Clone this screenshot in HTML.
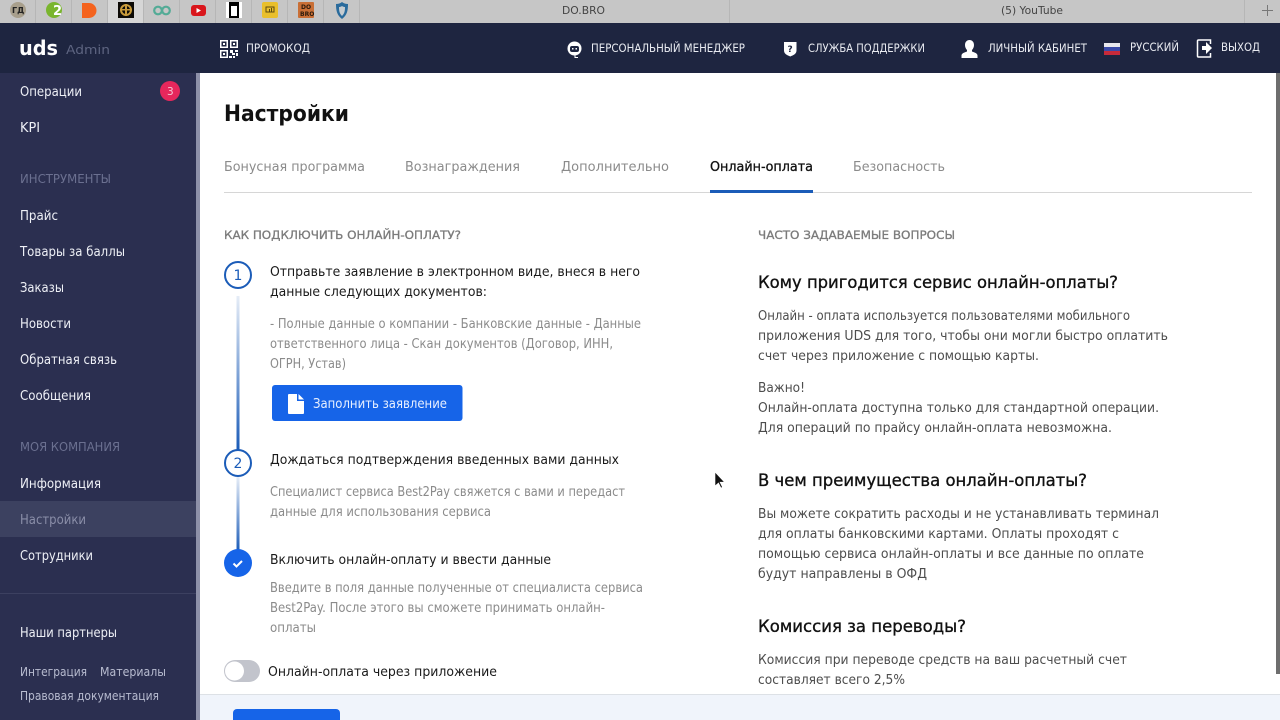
<!DOCTYPE html>
<html lang="ru"><head><meta charset="utf-8"><title>Настройки</title>
<style>
html,body{margin:0;padding:0;width:1280px;height:720px;overflow:hidden;background:#fff}
svg{display:block}
text{font-family:"DejaVu Sans","Liberation Sans",sans-serif;white-space:pre}
.m{font-size:13.5px;fill:#eef0f6}
.h{font-size:12px;fill:#6b7090}
.g{font-size:13.5px;fill:#8b8b8b}
.b{font-size:13.5px;fill:#1a1a1a}
.n{font-size:11.5px;fill:#e8eaf0}
.q{font-size:17px;fill:#111;stroke:#111;stroke-width:.35}
.r{font-size:13.5px;fill:#4d4d4d}
.c{font-size:11.5px;fill:#7b7b7b;stroke:#7b7b7b;stroke-width:.3}
</style></head><body>
<svg xmlns="http://www.w3.org/2000/svg" width="1280" height="720" viewBox="0 0 1280 720">
<defs>
<linearGradient id="l1" x1="0" y1="0" x2="0" y2="1"><stop offset="0" stop-color="#e6edf7"/><stop offset="1" stop-color="#1b5cb8"/></linearGradient>
</defs>
<!-- tab strip -->
<rect width="1280" height="23" fill="#c6c6c6"/>
<rect x="108" width="35" height="23" fill="#d6d6d6"/>
<g fill="#b6b6b6"><rect x="35" width="1" height="23"/><rect x="71" width="1" height="23"/><rect x="107" width="1" height="23"/><rect x="143" width="1" height="23"/><rect x="179" width="1" height="23"/><rect x="215" width="1" height="23"/><rect x="251" width="1" height="23"/><rect x="287" width="1" height="23"/><rect x="323" width="1" height="23"/><rect x="359" width="1" height="23"/><rect x="729" width="1" height="23"/><rect x="1244" width="1" height="23"/></g>
<circle cx="18" cy="10" r="8" fill="#a89f8c"/><text x="12" y="13" font-size="8" font-weight="bold" fill="#222">ГД</text>
<circle cx="54" cy="10" r="8" fill="#7ab52e"/><text x="53" y="15" font-size="13" font-weight="bold" fill="#fff">2</text>
<path d="M82 3h7a7.500 7.500 0 0 1 0 15h-7z" fill="#f4631e"/>
<rect x="118" y="2" width="16" height="16" fill="#0c0a06"/><circle cx="126" cy="10" r="5" fill="none" stroke="#c89a3a" stroke-width="2"/><rect x="125" y="4" width="2" height="12" fill="#c89a3a"/><rect x="120" y="9" width="12" height="1.500" fill="#c89a3a"/>
<circle cx="158" cy="10.500" r="3.800" fill="none" stroke="#53ab96" stroke-width="2.200"/><circle cx="166" cy="10.500" r="3.800" fill="none" stroke="#53ab96" stroke-width="2.200"/>
<rect x="191" y="5" width="15" height="11" rx="3" fill="#d9161c"/><path d="M196.500 8l4.500 2.500-4.500 2.500z" fill="#fff"/>
<rect x="226" y="2" width="16" height="16" fill="#fff"/><rect x="229" y="2" width="10" height="16" fill="#000"/><rect x="231" y="6" width="6" height="10" fill="#fff"/>
<rect x="262" y="2" width="16" height="16" rx="2" fill="#e9bf2c"/><path d="M266 7h8v5h-8z" fill="none" stroke="#5a4a10"/><path d="M269 9h1v3h-1zm2-1h1v4h-1z" fill="#5a4a10"/>
<rect x="298" y="2" width="16" height="16" rx="1" fill="#c96f36"/><text x="301" y="9" font-size="6" font-weight="bold" fill="#2b1a0c">DO</text><text x="300" y="16" font-size="6" font-weight="bold" fill="#2b1a0c">BRO</text>
<path d="M342 2c2 1.500 4 2 6 2 0 7-1 11-6 15-5-4-6-8-6-15 2 0 4-.5 6-2z" fill="#2a6b9c"/><path d="M342 6c1 .7 2 1 3 1 0 4-.5 6.500-3 9-2.500-2.500-3-5-3-9 1 0 2-.3 3-1z" fill="#c6ccd0"/>
<text x="562" y="14" font-size="11" fill="#444" textLength="43" lengthAdjust="spacingAndGlyphs">DO.BRO</text>
<text x="1001" y="14" font-size="11" fill="#444" textLength="62" lengthAdjust="spacingAndGlyphs">(5) YouTube</text>
<path d="M1262 10.500h11M1267.500 5v11" stroke="#777" stroke-width="1" fill="none"/>
<!-- top nav -->
<rect y="23" width="1280" height="50" fill="#1e2540"/>
<text x="19" y="55" font-size="20" font-weight="bold" fill="#fff" textLength="39" lengthAdjust="spacingAndGlyphs">uds</text>
<text x="66" y="54" font-size="12.500" fill="#5d6480" textLength="44" lengthAdjust="spacingAndGlyphs">Admin</text>
<!-- qr -->
<g fill="#fff"><path fill-rule="evenodd" d="M220 40h8v8h-8zm1.500 1.500v5h5v-5zM230 40h8v8h-8zm1.500 1.500v5h5v-5zM220 50h8v8h-8zm1.500 1.500v5h5v-5z"/><rect x="223" y="43" width="2" height="2"/><rect x="233" y="43" width="2" height="2"/><rect x="223" y="53" width="2" height="2"/><rect x="230" y="50" width="3" height="3"/><rect x="235" y="50" width="3" height="2"/><rect x="232" y="53" width="3" height="2"/><rect x="236" y="53" width="2" height="3"/><rect x="229" y="56" width="3" height="2"/><rect x="233" y="56" width="2" height="2"/></g>
<text x="246" y="52" class="n" textLength="64" lengthAdjust="spacingAndGlyphs">ПРОМОКОД</text>
<!-- manager -->
<circle cx="574.500" cy="48.500" r="7" fill="#fff"/><rect x="570" y="46" width="9" height="6" rx="2" fill="#1e2540"/><rect x="572" y="48" width="1.500" height="1.500" fill="#fff"/><rect x="575.500" y="48" width="1.500" height="1.500" fill="#fff"/><path d="M575 55.500v2h3" fill="none" stroke="#fff" stroke-width="1"/>
<text x="591" y="52" class="n" textLength="154" lengthAdjust="spacingAndGlyphs">ПЕРСОНАЛЬНЫЙ МЕНЕДЖЕР</text>
<!-- support -->
<path d="M784 42h12.500v8.500c0 3-2.500 4.500-6.250 6-3.750-1.500-6.250-3-6.250-6z" fill="#fff"/><text x="787.500" y="52" font-size="9" font-weight="bold" fill="#1e2540">?</text>
<text x="808" y="52" class="n" textLength="117" lengthAdjust="spacingAndGlyphs">СЛУЖБА ПОДДЕРЖКИ</text>
<!-- user -->
<path d="M969.500 40c2.800 0 4.500 2.200 4.500 5 0 2-.8 3.800-2 5v1.500c2.500 1 5.500 1.800 5.500 4V58h-16v-2.500c0-2.200 3-3 5.500-4V50c-1.200-1.200-2-3-2-5 0-2.800 1.700-5 4.500-5z" fill="#fff"/>
<text x="988" y="52" class="n" textLength="99" lengthAdjust="spacingAndGlyphs">ЛИЧНЫЙ КАБИНЕТ</text>
<!-- flag -->
<rect x="1104" y="43" width="16" height="4" fill="#e8e8ee"/><rect x="1104" y="47" width="16" height="4" fill="#3a4aa8"/><rect x="1104" y="51" width="16" height="4" fill="#c62a3a"/>
<text x="1130" y="51" class="n" textLength="49" lengthAdjust="spacingAndGlyphs">РУССКИЙ</text>
<!-- exit -->
<path d="M1210.500 44v-4h-12a1 1 0 0 0-1 1v15a1 1 0 0 0 1 1h12v-4" fill="none" stroke="#fff" stroke-width="1.500"/><path d="M1202 46h4v-4l6 6-6 6v-4h-4z" fill="#fff"/>
<text x="1221" y="51" class="n" textLength="39" lengthAdjust="spacingAndGlyphs">ВЫХОД</text>
<!-- sidebar -->
<rect y="73" width="196" height="647" fill="#2b2f50"/>
<rect x="196" y="73" width="4" height="647" fill="#8d90a8"/>
<rect y="501" width="196" height="36" fill="#3c4160"/>
<rect y="593" width="196" height="1" fill="#3c4060"/>
<text x="20" y="96" class="m" textLength="62" lengthAdjust="spacingAndGlyphs">Операции</text>
<circle cx="170" cy="91" r="10" fill="#e6275c"/><text x="167" y="95" font-size="10.500" fill="#f4c8d4">3</text>
<text x="20" y="132" class="m" textLength="20" lengthAdjust="spacingAndGlyphs">KPI</text>
<text x="20" y="183" class="h" textLength="91" lengthAdjust="spacingAndGlyphs">ИНСТРУМЕНТЫ</text>
<text x="20" y="220" class="m" textLength="38" lengthAdjust="spacingAndGlyphs">Прайс</text>
<text x="20" y="256" class="m" textLength="105" lengthAdjust="spacingAndGlyphs">Товары за баллы</text>
<text x="20" y="292" class="m" textLength="44" lengthAdjust="spacingAndGlyphs">Заказы</text>
<text x="20" y="328" class="m" textLength="51" lengthAdjust="spacingAndGlyphs">Новости</text>
<text x="20" y="364" class="m" textLength="97" lengthAdjust="spacingAndGlyphs">Обратная связь</text>
<text x="20" y="400" class="m" textLength="71" lengthAdjust="spacingAndGlyphs">Сообщения</text>
<text x="20" y="451" class="h" textLength="100" lengthAdjust="spacingAndGlyphs">МОЯ КОМПАНИЯ</text>
<text x="20" y="488" class="m" textLength="81" lengthAdjust="spacingAndGlyphs">Информация</text>
<text x="20" y="524" class="m" style="fill:#8a8ea8" textLength="66" lengthAdjust="spacingAndGlyphs">Настройки</text>
<text x="20" y="560" class="m" textLength="73" lengthAdjust="spacingAndGlyphs">Сотрудники</text>
<text x="20" y="637" class="m" textLength="97" lengthAdjust="spacingAndGlyphs">Наши партнеры</text>
<text x="20" y="676" font-size="12" fill="#b8bcd0" textLength="67" lengthAdjust="spacingAndGlyphs">Интеграция</text>
<text x="100" y="676" font-size="12" fill="#b8bcd0" textLength="66" lengthAdjust="spacingAndGlyphs">Материалы</text>
<text x="20" y="700" font-size="12" fill="#b8bcd0" textLength="139" lengthAdjust="spacingAndGlyphs">Правовая документация</text>
<!-- content header -->
<text x="224" y="121" font-size="22.500" font-weight="bold" fill="#111" textLength="125" lengthAdjust="spacingAndGlyphs">Настройки</text>
<text x="224" y="171" class="g" textLength="141" lengthAdjust="spacingAndGlyphs">Бонусная программа</text>
<text x="405" y="171" class="g" textLength="115" lengthAdjust="spacingAndGlyphs">Вознаграждения</text>
<text x="561" y="171" class="g" textLength="108" lengthAdjust="spacingAndGlyphs">Дополнительно</text>
<text x="710" y="171" font-size="13.500" fill="#111" stroke="#111" stroke-width=".3" textLength="103" lengthAdjust="spacingAndGlyphs">Онлайн-оплата</text>
<text x="853" y="171" class="g" textLength="92" lengthAdjust="spacingAndGlyphs">Безопасность</text>
<rect x="224" y="192" width="1028" height="1" fill="#d6d6d6"/>
<rect x="710" y="190" width="103" height="3" fill="#1b5cb8"/>
<!-- left col -->
<text x="224" y="239" class="c" textLength="237" lengthAdjust="spacingAndGlyphs">КАК ПОДКЛЮЧИТЬ ОНЛАЙН-ОПЛАТУ?</text>
<rect x="236.500" y="296" width="3" height="154" fill="url(#l1)"/>
<rect x="236.500" y="477" width="3" height="74" fill="url(#l1)"/>
<circle cx="238" cy="275" r="13" fill="#fff" stroke="#1b5cb8" stroke-width="2"/>
<text x="233.500" y="280" font-size="14" fill="#1b5cb8">1</text>
<circle cx="238" cy="463" r="13" fill="#fff" stroke="#1b5cb8" stroke-width="2"/>
<text x="233.500" y="468" font-size="14" fill="#1b5cb8">2</text>
<circle cx="238" cy="563" r="14" fill="#1664e8"/>
<path d="M233.500 563.500l3 3 5.500-5.500" fill="none" stroke="#fff" stroke-width="2"/>
<text x="270" y="276" class="b" textLength="370" lengthAdjust="spacingAndGlyphs">Отправьте заявление в электронном виде, внеся в него</text>
<text x="270" y="296" class="b" textLength="217" lengthAdjust="spacingAndGlyphs">данные следующих документов:</text>
<text x="270" y="328" class="g" textLength="371" lengthAdjust="spacingAndGlyphs">- Полные данные о компании - Банковские данные - Данные</text>
<text x="270" y="348" class="g" textLength="343" lengthAdjust="spacingAndGlyphs">ответственного лица - Скан документов (Договор, ИНН,</text>
<text x="270" y="368" class="g" textLength="76" lengthAdjust="spacingAndGlyphs">ОГРН, Устав)</text>
<rect x="272" y="385" width="190.500" height="36" rx="3" fill="#1664e8"/>
<path d="M288 395a1 1 0 0 1 1-1h8v7h7v12a1 1 0 0 1-1 1h-14a1 1 0 0 1-1-1z" fill="#fff"/><path d="M298.500 394l5.500 5.500h-5.500z" fill="#fff"/>
<text x="313" y="408" font-size="13.500" fill="#e8f0ff" textLength="134" lengthAdjust="spacingAndGlyphs">Заполнить заявление</text>
<text x="270" y="464" class="b" textLength="349" lengthAdjust="spacingAndGlyphs">Дождаться подтверждения введенных вами данных</text>
<text x="270" y="496" class="g" textLength="355" lengthAdjust="spacingAndGlyphs">Специалист сервиса Best2Pay свяжется с вами и передаст</text>
<text x="270" y="516" class="g" textLength="221" lengthAdjust="spacingAndGlyphs">данные для использования сервиса</text>
<text x="270" y="564" class="b" textLength="281" lengthAdjust="spacingAndGlyphs">Включить онлайн-оплату и ввести данные</text>
<text x="270" y="592" class="g" textLength="373" lengthAdjust="spacingAndGlyphs">Введите в поля данные полученные от специалиста сервиса</text>
<text x="270" y="612" class="g" textLength="335" lengthAdjust="spacingAndGlyphs">Best2Pay. После этого вы сможете принимать онлайн-</text>
<text x="270" y="632" class="g" textLength="46" lengthAdjust="spacingAndGlyphs">оплаты</text>
<rect x="224" y="660" width="36" height="22" rx="11" fill="#c2c4cc"/><circle cx="234.500" cy="671" r="9.500" fill="#fff"/>
<text x="268" y="676" class="b" textLength="229" lengthAdjust="spacingAndGlyphs">Онлайн-оплата через приложение</text>
<!-- right col -->
<text x="758" y="239" class="c" textLength="197" lengthAdjust="spacingAndGlyphs">ЧАСТО ЗАДАВАЕМЫЕ ВОПРОСЫ</text>
<text x="758" y="288" class="q" textLength="360" lengthAdjust="spacingAndGlyphs">Кому пригодится сервис онлайн-оплаты?</text>
<text x="758" y="320" class="r" textLength="372" lengthAdjust="spacingAndGlyphs">Онлайн - оплата используется пользователями мобильного</text>
<text x="758" y="340" class="r" textLength="410" lengthAdjust="spacingAndGlyphs">приложения UDS для того, чтобы они могли быстро оплатить</text>
<text x="758" y="360" class="r" textLength="281" lengthAdjust="spacingAndGlyphs">счет через приложение с помощью карты.</text>
<text x="758" y="392" class="r" textLength="47" lengthAdjust="spacingAndGlyphs">Важно!</text>
<text x="758" y="412" class="r" textLength="401" lengthAdjust="spacingAndGlyphs">Онлайн-оплата доступна только для стандартной операции.</text>
<text x="758" y="432" class="r" textLength="354" lengthAdjust="spacingAndGlyphs">Для операций по прайсу онлайн-оплата невозможна.</text>
<text x="758" y="486" class="q" textLength="329" lengthAdjust="spacingAndGlyphs">В чем преимущества онлайн-оплаты?</text>
<text x="758" y="518" class="r" textLength="401" lengthAdjust="spacingAndGlyphs">Вы можете сократить расходы и не устанавливать терминал</text>
<text x="758" y="538" class="r" textLength="361" lengthAdjust="spacingAndGlyphs">для оплаты банковскими картами. Оплаты проходят с</text>
<text x="758" y="558" class="r" textLength="386" lengthAdjust="spacingAndGlyphs">помощью сервиса онлайн-оплаты и все данные по оплате</text>
<text x="758" y="578" class="r" textLength="169" lengthAdjust="spacingAndGlyphs">будут направлены в ОФД</text>
<text x="758" y="632" class="q" textLength="208" lengthAdjust="spacingAndGlyphs">Комиссия за переводы?</text>
<text x="758" y="664" class="r" textLength="369" lengthAdjust="spacingAndGlyphs">Комиссия при переводе средств на ваш расчетный счет</text>
<text x="758" y="684" class="r" textLength="147" lengthAdjust="spacingAndGlyphs">составляет всего 2,5%</text>
<!-- right scrollbar -->
<rect x="1276" y="73" width="4" height="601" fill="#6e6e6e"/>
<!-- footer -->
<rect x="200" y="694" width="1080" height="26" fill="#f0f4fb"/>
<rect x="200" y="694" width="1080" height="1" fill="#dde1e6"/>
<rect x="233" y="709" width="107" height="20" rx="4" fill="#1664e8"/>
<!-- cursor -->
<path d="M715 472v14l3.500-3 2.500 5 1.500-.8-2.500-5h4.500z" fill="#111" stroke="#fff" stroke-width=".6"/>
</svg>
</body></html>
